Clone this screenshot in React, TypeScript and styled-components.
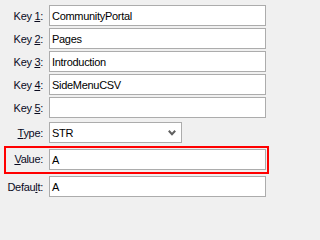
import React from "react";
import styled, { createGlobalStyle } from "styled-components";

const Global = createGlobalStyle`
  html, body { margin: 0; padding: 0; background: #f0f0f0; }
  body { font-family: "Liberation Sans", Arial, sans-serif; }
`;

const Form = styled.div`
  width: 271px;
  height: 202px;
  box-sizing: border-box;
  padding: 5px 5px 0 0;
  background: #f0f0f0;
  display: flex;
  flex-direction: column;
  gap: 2px;
  font-family: "Liberation Sans", Arial, sans-serif;
  font-size: 11px;
  letter-spacing: -0.3px;
  color: #000;
`;

const Label = styled.label`
  width: 43px;
  flex: none;
  text-align: right;
  white-space: nowrap;
  color: #0a0a1e;
  u { text-decoration: underline; text-underline-offset: 1px; }
`;

const Row = styled.div<{ $highlight?: boolean; $gapBefore?: number }>`
  display: flex;
  align-items: center;
  gap: 6px;
  height: 21px;
  margin-top: ${(p) => p.$gapBefore ?? 0}px;
  ${(p) =>
    p.$highlight &&
    `
    height: 23px;
    border: 2px solid #ff0000;
    margin-left: 4px;
    margin-right: -3px;
    padding: 1px 1px 0 0;
    align-items: flex-start;
    ${Label} { width: 37px; line-height: 21px; }
  `}
`;

const TextBox = styled.div<{ $width?: number }>`
  box-sizing: border-box;
  height: 21px;
  ${(p) => (p.$width ? `width: ${p.$width}px; flex: none;` : `flex: 1;`)}
  background: #fff;
  border: 1px solid #acacac;
  padding: 0 2px;
  display: flex;
  align-items: center;
  white-space: nowrap;
  overflow: hidden;
`;

const Select = styled(TextBox)`
  justify-content: space-between;
  padding-right: 5px;
`;

const Chevron = () => (
  <svg width="8" height="6" viewBox="0 0 8 6">
    <polyline points="0.8,0.8 4,4.2 7.2,0.8" fill="none" stroke="#606060" strokeWidth="2" />
  </svg>
);

export default function App() {
  return (
    <>
      <Global />
      <Form>
        <Row>
          <Label>Key <u>1</u>:</Label>
          <TextBox>CommunityPortal</TextBox>
        </Row>
        <Row>
          <Label>Key <u>2</u>:</Label>
          <TextBox>Pages</TextBox>
        </Row>
        <Row>
          <Label>Key <u>3</u>:</Label>
          <TextBox>Introduction</TextBox>
        </Row>
        <Row>
          <Label>Key <u>4</u>:</Label>
          <TextBox>SideMenuCSV</TextBox>
        </Row>
        <Row>
          <Label>Key <u>5</u>:</Label>
          <TextBox></TextBox>
        </Row>
        <Row $gapBefore={2}>
          <Label><u>T</u>ype:</Label>
          <Select $width={133}>
            <span>STR</span>
            <Chevron />
          </Select>
        </Row>
        <Row $highlight $gapBefore={1}>
          <Label><u>V</u>alue:</Label>
          <TextBox>A</TextBox>
        </Row>
        <Row>
          <Label>Defau<u>l</u>t:</Label>
          <TextBox>A</TextBox>
        </Row>
      </Form>
    </>
  );
}
